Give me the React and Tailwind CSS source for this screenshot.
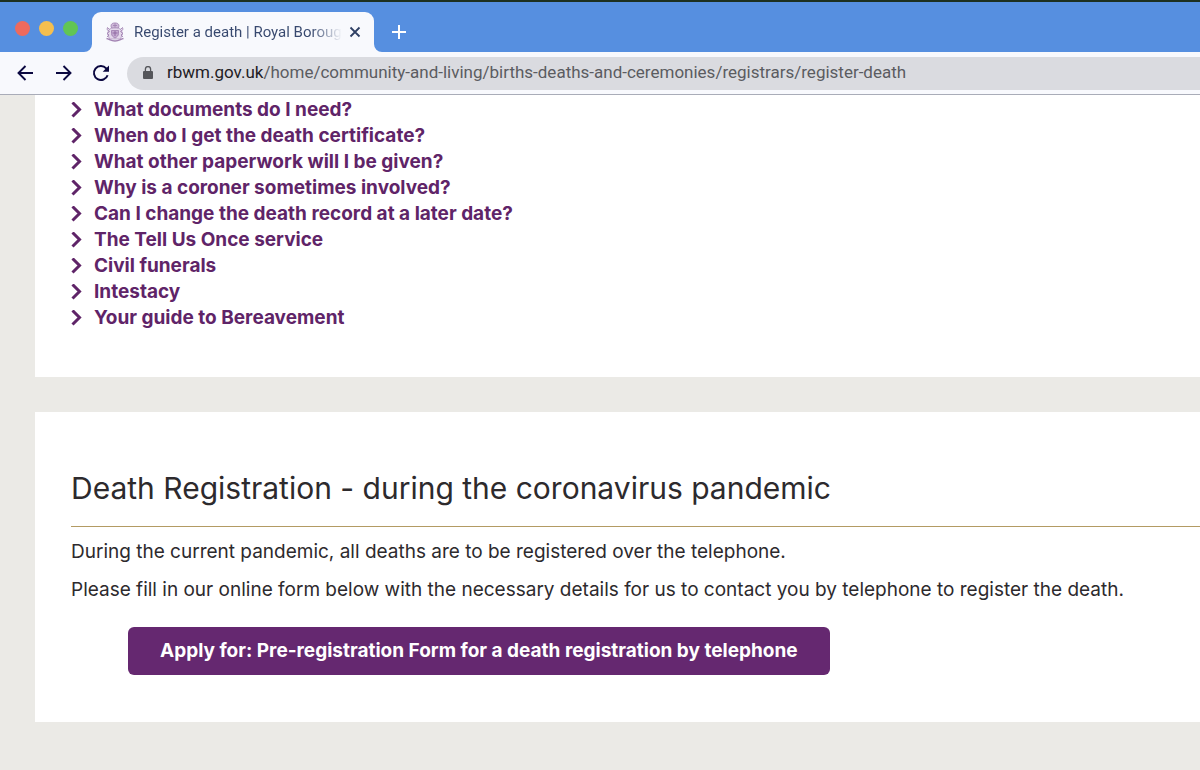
import React from "react";

const questions = [
  "What documents do I need?",
  "When do I get the death certificate?",
  "What other paperwork will I be given?",
  "Why is a coroner sometimes involved?",
  "Can I change the death record at a later date?",
  "The Tell Us Once service",
  "Civil funerals",
  "Intestacy",
  "Your guide to Bereavement",
];

export default function App() {
  return (
    <div className="flex min-h-screen flex-col overflow-hidden bg-[#ebeae6] font-['Inter',sans-serif]">
      <TabStrip />
      <Toolbar />
      <main className="flex flex-col gap-[35px] pb-12 pl-[35px]">
        <section className="bg-white px-9 pt-[2px] pb-[46px]">
          <ul>
            {questions.map((q) => (
              <li key={q} className="flex h-[26px] items-center gap-[11px]">
                <ChevronIcon />
                <a href="#" className="text-[19px] leading-[26px] font-bold whitespace-nowrap text-[#5f2468]">
                  {q}
                </a>
              </li>
            ))}
          </ul>
        </section>

        <section className="bg-white pt-[54px] pb-[47px] pl-9">
          <h1 className="border-b border-[#b39b63] pb-4 text-[30px] leading-[44px] whitespace-nowrap text-[#2d2a2d]">
            Death Registration - during the coronavirus pandemic
          </h1>
          <p className="mt-3 text-[19px] leading-[26px] whitespace-nowrap text-[#2d2a2d]">
            During the current pandemic, all deaths are to be registered over the telephone.
          </p>
          <p className="mt-3 text-[19px] leading-[26px] whitespace-nowrap text-[#2d2a2d]">
            Please fill in our online form below with the necessary details for us to contact you by telephone to register the death.
          </p>
          <button
            type="button"
            className="mt-6 ml-[57px] block h-12 rounded-md bg-[#652870] px-8 text-[19px] font-bold whitespace-nowrap text-white"
          >
            Apply for: Pre-registration Form for a death registration by telephone
          </button>
        </section>
      </main>
    </div>
  );
}

function TabStrip() {
  return (
    <div className="flex h-[52px] items-end border-t-2 border-[#1d3020] bg-[#568fe0] font-['Roboto',sans-serif]">
      <div className="flex w-[84px] gap-[9px] self-start pt-[19px] pl-[15px]">
        <span className="size-[15px] rounded-full bg-[#ed6a5e]" />
        <span className="size-[15px] rounded-full bg-[#f5bf4f]" />
        <span className="size-[15px] rounded-full bg-[#61c554]" />
      </div>
      <TabFoot />
      <div className="flex h-10 w-[282px] items-center rounded-t-[9px] bg-[#f8f9fd] pr-3 pl-[13px]">
        <CrestIcon />
        <span className="ml-[9px] w-[208px] overflow-hidden bg-linear-to-r from-[#37486e] from-85% to-transparent bg-clip-text text-[15px] whitespace-nowrap text-transparent">
          Register a death | Royal Borough
        </span>
        <button type="button" aria-label="Close tab" className="ml-[6px]">
          <svg width="14" height="14" viewBox="0 0 14 14" fill="none" stroke="#2f4064" strokeWidth="1.8">
            <path d="M2.5 2.5l9 9M11.5 2.5l-9 9" />
          </svg>
        </button>
      </div>
      <TabFoot flipped />
      <button type="button" aria-label="New tab" className="mb-3 ml-[9px]">
        <svg width="16" height="16" viewBox="0 0 16 16" fill="none" stroke="#fff" strokeWidth="2">
          <path d="M8 1v14M1 8h14" />
        </svg>
      </button>
    </div>
  );
}

function Toolbar() {
  return (
    <nav className="flex h-[43px] items-center border-b border-[#a9acb8] bg-[#f8f9fd] pl-[17px] font-['Roboto',sans-serif]">
      <button type="button" aria-label="Back">
        <svg width="17" height="16" viewBox="0 0 17 16" fill="none" stroke="#0b0840" strokeWidth="1.9">
          <path d="M16 8H2M8.5 1L1.5 8l7 7" />
        </svg>
      </button>
      <button type="button" aria-label="Forward" className="ml-[21px]">
        <svg width="17" height="16" viewBox="0 0 17 16" fill="none" stroke="#0b0840" strokeWidth="1.9">
          <path d="M1 8h14M8.5 1l7 7-7 7" />
        </svg>
      </button>
      <button type="button" aria-label="Reload" className="ml-5">
        <svg width="18" height="18" viewBox="0 0 18 18" fill="none" stroke="#0b0840" strokeWidth="2">
          <path d="M15.6 11.2A7 7 0 1 1 14.2 4.3L16 6.2" />
          <path d="M17 1.5v6.3h-6.3z" fill="#0b0840" stroke="none" />
        </svg>
      </button>
      <div className="ml-[17px] flex h-[33px] grow items-center rounded-l-full bg-[#dadbe0] pl-4 text-[17px]">
        <LockIcon />
        <label htmlFor="address" className="ml-[14px] text-[#1f2025]">
          rbwm.gov.uk
        </label>
        <input
          id="address"
          type="text"
          defaultValue="/home/community-and-living/births-deaths-and-ceremonies/registrars/register-death"
          className="min-w-0 grow bg-transparent text-[#5b5c61] outline-none"
        />
      </div>
    </nav>
  );
}

// curved foot where the active tab meets the toolbar
function TabFoot({ flipped }) {
  return (
    <svg width="8" height="8" viewBox="0 0 8 8" className={flipped ? "-scale-x-100" : ""}>
      <path d="M8 0v8H0a8 8 0 0 0 8-8z" fill="#f8f9fd" />
    </svg>
  );
}

function ChevronIcon() {
  return (
    <svg width="12" height="16" viewBox="0 0 12 16" fill="none" stroke="#5f2468" strokeWidth="3">
      <path d="M1.5 0.5l7 7-7 7" />
    </svg>
  );
}

function LockIcon() {
  return (
    <svg width="10" height="14" viewBox="0 0 10 14" fill="none">
      <rect y="5" width="10" height="8" rx="1" fill="#55565b" />
      <path d="M2.4 5.5V3.2a2.6 2.6 0 0 1 5.2 0v2.3" stroke="#55565b" strokeWidth="1.3" />
    </svg>
  );
}

function CrestIcon() {
  return (
    <svg width="20" height="20" viewBox="0 0 20 20" fill="none" stroke="#a383b3" strokeWidth="0.9">
      <path d="M6.5 6C5 1.5 8 1 10 1s5 .5 3.5 5z" fill="#cdb8d8" />
      <path d="M8 3.5h4M10 1.5V6" />
      <path d="M4 7.5c2-2 10-2 12 0l1.5 4-2 5.5h-11l-2-5.5z" fill="#e3d7ea" stroke="#b79fc5" />
      <path d="M6.5 8.5h7v3c0 2-1.500 3.500-3.500 4.500-2-1-3.500-2.500-3.500-4.500z" fill="#c3a9d0" />
      <path d="M7.500 11h5M10 9v5" stroke="#8c659f" />
      <path d="M4.500 7.500L2.500 5.500l-.5 2 2.500 2-2.500 2 2 1.500-2 2M15.500 7.500l2-2 .5 2-2.500 2 2.500 2-2 1.500 2 2" />
      <path d="M1.500 16.500c3 .5 4 2.500 8.500 2.500s5.500-2 8.500-2.500" strokeWidth="1.300" />
    </svg>
  );
}
